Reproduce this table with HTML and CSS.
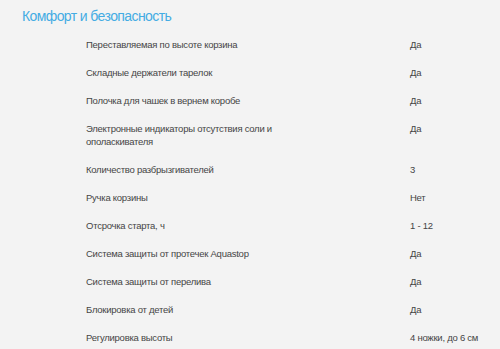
FILE: index.html
```html
<!DOCTYPE html>
<html lang="ru">
<head>
  <meta charset="UTF-8">
  <meta name="viewport" content="width=device-width, initial-scale=1.0">
  <title>Комфорт и безопасность</title>
<link rel="stylesheet" href="styles.css">
</head>
<body>
<div class="specs">
  <h2 class="specs-title">Комфорт и безопасность</h2>

  <div class="specs-list">
    <div class="row"><span class="name">Переставляемая по высоте корзина</span><span class="value">Да</span></div>
    <div class="row"><span class="name">Складные держатели тарелок</span><span class="value">Да</span></div>
    <div class="row"><span class="name">Полочка для чашек в вернем коробе</span><span class="value">Да</span></div>
    <div class="row"><span class="name">Электронные индикаторы отсутствия соли и ополаскивателя</span><span class="value">Да</span></div>
    <div class="row"><span class="name">Количество разбрызгивателей</span><span class="value">3</span></div>
    <div class="row"><span class="name">Ручка корзины</span><span class="value">Нет</span></div>
    <div class="row"><span class="name">Отсрочка старта, ч</span><span class="value">1 - 12</span></div>
    <div class="row"><span class="name">Система защиты от протечек Aquastop</span><span class="value">Да</span></div>
    <div class="row"><span class="name">Система защиты от перелива</span><span class="value">Да</span></div>
    <div class="row"><span class="name">Блокировка от детей</span><span class="value">Да</span></div>
    <div class="row"><span class="name">Регулировка высоты</span><span class="value">4 ножки, до 6 см</span></div>
  </div>
</div>
</body>
</html>
```

FILE: styles.css
```css
body {
  margin: 0;
  background: #f3f3f3;
  font-family: "Liberation Sans", Arial, sans-serif;
  color: #454545;
}

.specs {
  padding: 6px 0 0 22px;
}

.specs-title {
  margin: 0;
  font-size: 14px;
  font-weight: normal;
  line-height: 20px;
  letter-spacing: -0.6px;
  color: #44ace3;
}

.specs-list {
  margin: 4px 0 0 64px;
}

.row {
  display: grid;
  grid-template-columns: 324px 1fr;
  padding: 7.5px 0;
  font-size: 9.5px;
  line-height: 13px;
  letter-spacing: -0.25px;
}

.row .name {
  padding-right: 104px;
}
```
